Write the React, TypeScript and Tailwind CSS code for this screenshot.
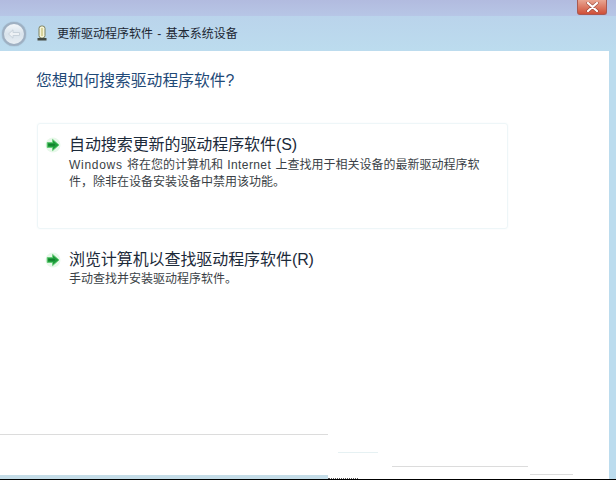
const cjk = "font-['Liberation_Sans','Noto_Sans_CJK_SC',sans-serif]";

function GreenArrow() {
  return (
    <svg width="16" height="16" viewBox="0 0 16 16" className="shrink-0">
      <circle cx="8" cy="8" r="7.5" fill="#d8f3dc" opacity="0.6" />
      <path d="M2.2 5.6h5.4V2.4L14 8l-6.4 5.6v-3.2H2.2z" fill="#1c9c3a" stroke="#63cc74" strokeWidth="0.9" />
      <path d="M3.5 7.2h6.4v1.4H3.5z" fill="#0f7a2a" />
    </svg>
  );
}

function BackButton() {
  return (
    <div className="flex h-[24px] w-[24px] items-center justify-center rounded-full border-2 border-[#9fb0c2] bg-gradient-to-b from-[#f4f7fa] via-[#d9e3ec] to-[#e8eef3] shadow-[0_0_1px_#6f8094]">
      <svg width="14" height="12" viewBox="0 0 14 12">
        <path d="M1.5 6L6 1.8v2.7h6.5v3H6v2.7z" fill="#edf1f5" stroke="#c8d2db" strokeWidth="1" />
      </svg>
    </div>
  );
}

function DeviceIcon() {
  return (
    <svg width="12" height="17" viewBox="0 0 12 17">
      <rect x="3" y="1" width="6" height="12" rx="2.4" fill="#f6f4d8" stroke="#7d8260" />
      <rect x="5.2" y="3" width="1.6" height="8" fill="#d0cb8c" />
      <rect x="1.5" y="13" width="9" height="2.5" fill="#444a42" />
    </svg>
  );
}

function CloseButton() {
  return (
    <div className="flex h-[15px] w-[30px] items-center justify-center rounded-b-[3px] border border-t-0 border-[#a85a52] bg-gradient-to-b from-[#e8a592] via-[#dc7a64] to-[#cf4e38]">
      <svg width="13" height="10" viewBox="0 0 13 10">
        <path d="M2 1l9 8M11 1l-9 8" stroke="#6e2a24" strokeWidth="3.4" strokeLinecap="round" opacity="0.55" />
        <path d="M2 1l9 8M11 1l-9 8" stroke="#ffffff" strokeWidth="2.2" strokeLinecap="round" />
      </svg>
    </div>
  );
}

function Option({ title, children, boxed }: { title: string; children: React.ReactNode; boxed?: boolean }) {
  return (
    <div className={boxed ? "h-[106px] w-[471px] rounded-[3px] border border-[#eef6f8] pl-[7px] pt-[11px] shadow-[0_0_2px_#f1f8fa]" : "w-[471px] border border-transparent pl-[7px]"}>
      <div className="flex items-center gap-[8px]">
        <GreenArrow />
        <span className="text-[16px] leading-[20px] tracking-[-0.08px] text-[#1c2a3a]">{title}</span>
      </div>
      <div className={boxed ? "ml-[24px] mt-[2px]" : "ml-[24px] mt-[1px]"}>{children}</div>
    </div>
  );
}

const line = "whitespace-nowrap text-[12px] leading-[17px] text-[#3a3f46]";

export default function App() {
  return (
    <div className={`flex h-[480px] w-[616px] flex-col overflow-hidden bg-white ${cjk}`}>
      <div className="flex h-[51px] flex-col bg-gradient-to-b from-[#b9d0ea] to-[#bcdcee]">
        <div className="flex h-[16px] justify-end bg-gradient-to-b from-[#b2bbdf] to-[#b7c6e6] pr-[9px]">
          <CloseButton />
        </div>
        <div className="flex flex-1 items-center pl-[2px]">
          <BackButton />
          <div className="ml-[10px]">
            <DeviceIcon />
          </div>
          <span className="ml-[9px] text-[12px] text-[#1d2733] [word-spacing:1px]">更新驱动程序软件 - 基本系统设备</span>
        </div>
      </div>
      <div className="flex flex-1 bg-[#bcdcee]">
        <div className="flex w-[609px] flex-col bg-white">
          <h1 className="ml-[36px] mt-[20px] text-[15.8px] font-normal leading-[20px] text-[#1f4a78]">您想如何搜索驱动程序软件?</h1>
          <div className="ml-[37px] mt-[32px]">
            <Option title="自动搜索更新的驱动程序软件(S)" boxed>
              <p className={`${line} [word-spacing:1px]`}>
                <span className="tracking-[0.7px]">Windows</span> 将在您的计算机和 <span className="tracking-[0.4px]">Internet</span> 上查找用于相关设备的最新驱动程序软
              </p>
              <p className={line}>件，除非在设备安装设备中禁用该功能。</p>
            </Option>
          </div>
          <div className="ml-[37px] mt-[20px]">
            <Option title="浏览计算机以查找驱动程序软件(R)">
              <p className={line}>手动查找并安装驱动程序软件。</p>
            </Option>
          </div>
          <div className="mt-auto flex h-[45px]">
            <div className="flex w-[328px] flex-col">
              <div className="h-px bg-[#dcdcdc]" />
              <div className="mt-auto h-[4px] bg-[#c5dde8]" />
            </div>
            <div className="flex flex-1 flex-col">
              <div className="ml-[10px] mt-[18px] h-px w-[40px] bg-[#e6f1f3]" />
              <div className="ml-[64px] mt-[13px] h-px w-[136px] bg-[#dcdcdc]" />
              <div className="ml-[202px] mt-[7px] h-px w-[43px] bg-[#dcdcdc]" />
              <div className="mt-auto w-[30px] border-t border-dotted border-[#555555]" />
            </div>
          </div>
          <div className="h-px shrink-0 bg-black" />
        </div>
        <div className="flex flex-1 flex-col justify-end">
          <div className="h-px bg-black" />
        </div>
      </div>
    </div>
  );
}
